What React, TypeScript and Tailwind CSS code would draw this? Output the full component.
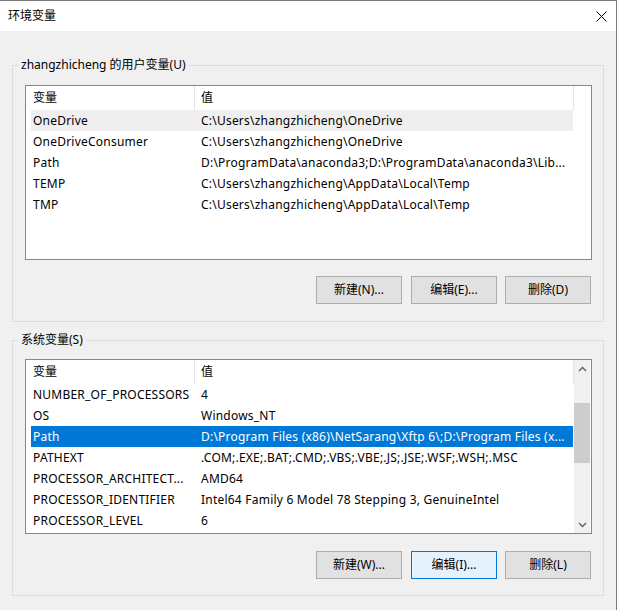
import React from "react";

type Row = { name: string; value: string; state?: "hover" | "selected" };

const userRows: Row[] = [
  { name: "OneDrive", value: "C:\\Users\\zhangzhicheng\\OneDrive", state: "hover" },
  { name: "OneDriveConsumer", value: "C:\\Users\\zhangzhicheng\\OneDrive" },
  { name: "Path", value: "D:\\ProgramData\\anaconda3;D:\\ProgramData\\anaconda3\\Lib..." },
  { name: "TEMP", value: "C:\\Users\\zhangzhicheng\\AppData\\Local\\Temp" },
  { name: "TMP", value: "C:\\Users\\zhangzhicheng\\AppData\\Local\\Temp" },
];

const sysRows: Row[] = [
  { name: "NUMBER_OF_PROCESSORS", value: "4" },
  { name: "OS", value: "Windows_NT" },
  { name: "Path", value: "D:\\Program Files (x86)\\NetSarang\\Xftp 6\\;D:\\Program Files (x...", state: "selected" },
  { name: "PATHEXT", value: ".COM;.EXE;.BAT;.CMD;.VBS;.VBE;.JS;.JSE;.WSF;.WSH;.MSC" },
  { name: "PROCESSOR_ARCHITECT...", value: "AMD64" },
  { name: "PROCESSOR_IDENTIFIER", value: "Intel64 Family 6 Model 78 Stepping 3, GenuineIntel" },
  { name: "PROCESSOR_LEVEL", value: "6" },
];

function ListBox({ rows, scrollbar }: { rows: Row[]; scrollbar?: boolean }) {
  return (
    <div className="flex h-[175px] w-[567px] border border-[#828790] bg-white">
      <div className="flex w-[548px] flex-col">
        <div className="flex h-[24px] items-center">
          <div className="h-full w-[169px] border-r border-[#e5e5e5] pl-[7px] leading-[24px]">变量</div>
          <div className="h-full w-[379px] border-r border-[#e5e5e5] pl-[6px] leading-[24px]">值</div>
        </div>
        {rows.map((r, i) => (
          <div
            key={i}
            className={
              "ml-[5px] flex h-[21px] w-[542px] leading-[21px] tracking-[0.22px] " +
              (r.state === "selected"
                ? "bg-[#0078d7] text-white"
                : r.state === "hover"
                ? "bg-[#efefef]"
                : "")
            }
          >
            <div className="w-[164px] overflow-hidden whitespace-nowrap pl-[2px]">{r.name}</div>
            <div className="w-[378px] overflow-hidden whitespace-nowrap pl-[6px]">{r.value}</div>
          </div>
        ))}
      </div>
      {scrollbar && (
        <div className="flex w-[17px]">
          <div className="flex w-[16px] flex-col bg-[#f0f0f0]">
            <div className="flex h-[17px] items-center justify-center">
              <svg width="9" height="6" viewBox="0 0 9 6">
                <path d="M1 5 L4.5 1.5 L8 5" fill="none" stroke="#606060" strokeWidth="1.4" />
              </svg>
            </div>
            <div className="mt-[26px] h-[60px] w-[16px] bg-[#cdcdcd]" />
            <div className="flex-1" />
            <div className="flex h-[17px] items-center justify-center">
              <svg width="9" height="6" viewBox="0 0 9 6">
                <path d="M1 1 L4.5 4.5 L8 1" fill="none" stroke="#606060" strokeWidth="1.4" />
              </svg>
            </div>
          </div>
          <div className="w-[1px] bg-white" />
        </div>
      )}
    </div>
  );
}

function Btn({ label, focused, className }: { label: string; focused?: boolean; className?: string }) {
  return (
    <div
      className={
        "flex h-[28px] w-[86px] items-center justify-center border " +
        (focused ? "border-[#0078d7] bg-[#e5f1fb] " : "border-[#adadad] bg-[#e1e1e1] ") +
        (className || "")
      }
    >
      {label}
    </div>
  );
}

function Group({
  title,
  rows,
  scrollbar,
  buttons,
  focusedIndex,
  className,
  btnGap,
}: {
  title: string;
  rows: Row[];
  scrollbar?: boolean;
  buttons: string[];
  focusedIndex?: number;
  className?: string;
  btnGap: string;
}) {
  return (
    <div className={"relative border border-[#dcdcdc] pl-[12px] " + (className || "")}>
      <span className="absolute -top-[9px] left-[5px] bg-[#f0f0f0] px-[3px] leading-[16px]">{title}</span>
      <ListBox rows={rows} scrollbar={scrollbar} />
      <div className={"flex w-[567px] justify-end pr-[1px] " + btnGap}>
        <Btn label={buttons[0]} focused={focusedIndex === 0} />
        <Btn label={buttons[1]} focused={focusedIndex === 1} className="ml-[9px]" />
        <Btn label={buttons[2]} focused={focusedIndex === 2} className="ml-[8px]" />
      </div>
    </div>
  );
}

export default function App() {
  return (
    <div
      className="h-[610px] w-[617px] overflow-hidden border-r border-t border-[#7a7a7a] bg-[#f0f0f0] text-[12px] text-black"
      style={{ fontFamily: '"Noto Sans", "Noto Sans CJK SC", sans-serif' }}
    >
      <div className="flex h-[30px] items-center justify-between bg-white pl-[8px] pr-[9px]">
        <span className="leading-[16px]">环境变量</span>
        <svg width="11" height="11" viewBox="0 0 11 11">
          <path d="M0.5 0.5 L10.5 10.5 M10.5 0.5 L0.5 10.5" stroke="#000" strokeWidth="1" />
        </svg>
      </div>
      <div className="px-[12px] pt-[34px]">
        <Group
          title="zhangzhicheng 的用户变量(U)"
          rows={userRows}
          buttons={["新建(N)...", "编辑(E)...", "删除(D)"]}
          className="pt-[19px] pb-[17px]"
          btnGap="mt-[16px]"
        />
        <Group
          title="系统变量(S)"
          rows={sysRows}
          scrollbar
          buttons={["新建(W)...", "编辑(I)...", "删除(L)"]}
          focusedIndex={1}
          className="mt-[18px] pt-[18px] pb-[16px]"
          btnGap="mt-[17px]"
        />
      </div>
    </div>
  );
}
